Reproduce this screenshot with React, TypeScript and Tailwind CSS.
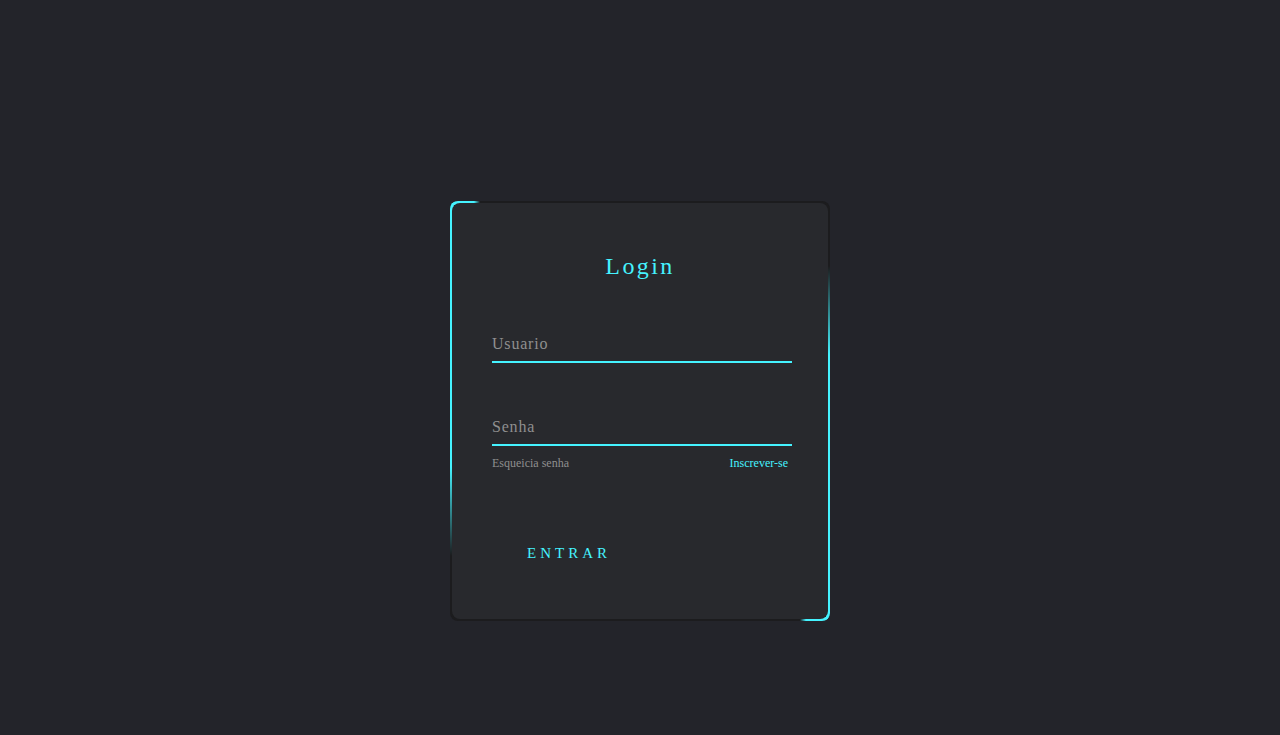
import React from "react";

const serif = { fontFamily: '"Liberation Serif", "Times New Roman", serif' };

export default function App() {
  return (
    <div
      className="min-h-screen w-full bg-[#23242a] flex justify-center pt-[201px]"
      style={serif}
    >
      <div className="relative w-[380px] h-[420px] rounded-lg bg-[#1c1c1e] overflow-hidden p-[2px]">
        {/* animated border remnants */}
        <div className="absolute left-0 top-0 w-[30px] h-[4px] bg-linear-to-r from-[#45f3ff] from-80% to-transparent" />
        <div className="absolute left-0 top-0 w-[4px] h-[355px] bg-linear-to-b from-[#45f3ff] from-75% to-transparent" />
        <div className="absolute right-0 bottom-0 w-[30px] h-[4px] bg-linear-to-l from-[#45f3ff] from-80% to-transparent" />
        <div className="absolute right-0 bottom-0 w-[4px] h-[355px] bg-linear-to-t from-[#45f3ff] from-75% to-transparent" />

        <form className="relative z-10 h-full w-full rounded-lg bg-[#28292d] pl-[40px] pt-[50px] flex flex-col">
          <h2 className="w-[296px] text-[24px] leading-[26px] text-[#45f3ff] text-center tracking-[0.1em] font-normal">
            Login
          </h2>

          <div className="relative mt-[36px] h-[48px] w-[300px]">
            <span className="absolute left-0 top-[20px] text-[16px] leading-[18px] text-[#8f8f8f] tracking-[0.05em]">
              Usuario
            </span>
            <i className="absolute left-0 bottom-0 h-[2px] w-full bg-[#45f3ff]" />
          </div>

          <div className="relative mt-[35px] h-[48px] w-[300px]">
            <span className="absolute left-0 top-[20px] text-[16px] leading-[18px] text-[#8f8f8f] tracking-[0.05em]">
              Senha
            </span>
            <i className="absolute left-0 bottom-0 h-[2px] w-full bg-[#45f3ff]" />
          </div>

          <div className="mt-[10px] w-[300px] flex justify-between text-[12px] leading-[14px] pr-[4px]">
            <span className="text-[#8f8f8f]">Esqueicia senha</span>
            <span className="text-[#45f3ff]">Inscrever-se</span>
          </div>

          <div className="mt-[64px] flex">
            <button
              type="button"
              className="w-[150px] py-[11px] pl-[35px] text-left text-[15px] leading-[16px] tracking-[4px] text-[#45f3ff] bg-transparent"
              style={serif}
            >
              ENTRAR
            </button>
          </div>
        </form>
      </div>
    </div>
  );
}
